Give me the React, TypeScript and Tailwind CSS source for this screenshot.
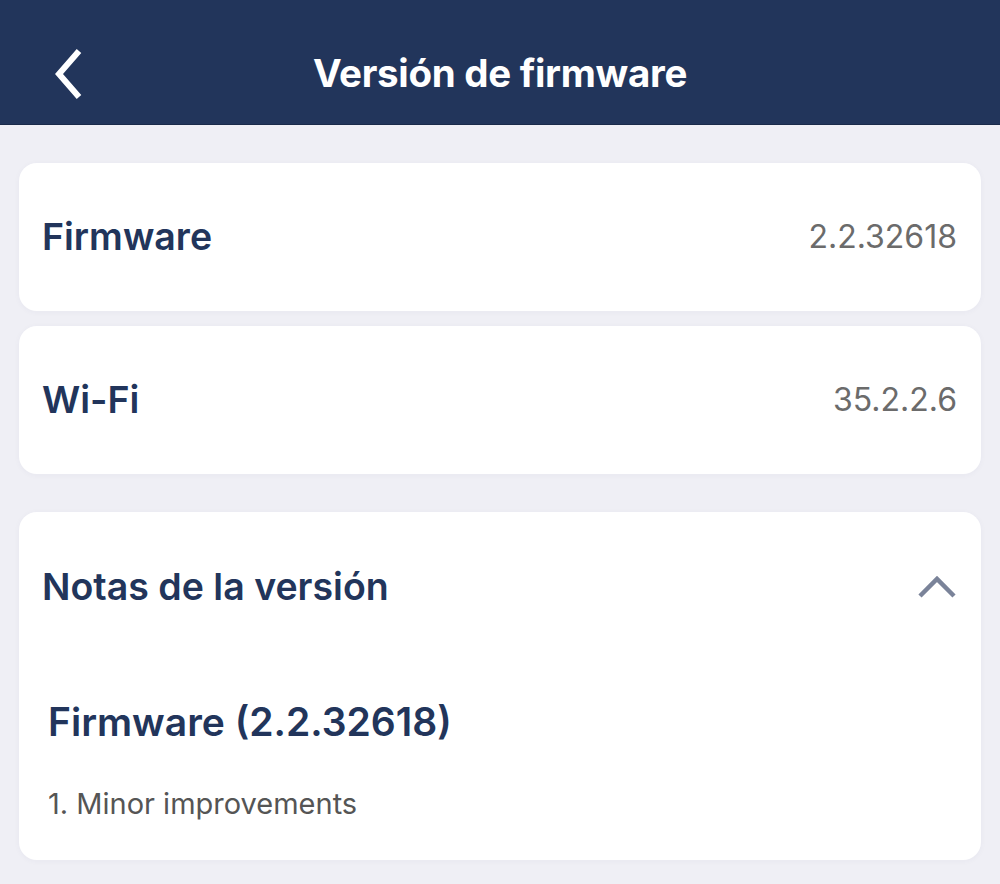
const font = { fontFamily: "Inter, 'Noto Sans', sans-serif" };

function ChevronLeft() {
  return (
    <svg width="36" height="52" viewBox="0 0 36 52" fill="none">
      <path d="M29 3 L9 26 L29 49" stroke="white" strokeWidth="6" strokeLinecap="butt" strokeLinejoin="miter" />
    </svg>
  );
}

function ChevronUp() {
  return (
    <svg width="38" height="24" viewBox="0 0 38 24" fill="none">
      <path d="M2 21 L19 4 L36 21" stroke="#7a8399" strokeWidth="4.5" strokeLinejoin="miter" />
    </svg>
  );
}

function InfoRow({ label, value }: { label: string; value: string }) {
  return (
    <div className="flex h-[148px] items-center justify-between rounded-[18px] bg-white pl-[23px] pr-[24px] shadow-[0_1px_6px_rgba(40,50,90,0.04)]">
      <span className="text-[37.5px] font-semibold leading-[44px] text-[#22355b]">{label}</span>
      <span className="text-[32px] leading-[38px] text-[#6b6b6b]">{value}</span>
    </div>
  );
}

export default function App() {
  return (
    <div className="min-h-[884px] w-full bg-[#efeff5]" style={font}>
      <header className="relative flex h-[125px] items-center justify-center border-b border-[#1a2a4a] bg-[#22355b] pt-[22px]">
        <button className="absolute left-[50px] top-[48px]">
          <ChevronLeft />
        </button>
        <h1 className="text-[38.5px] font-bold leading-[46px] tracking-[-0.3px] text-white">Versión de firmware</h1>
      </header>

      <main className="px-[19px] pt-[38px]">
        <div className="flex flex-col gap-[15px]">
          <InfoRow label="Firmware" value="2.2.32618" />
          <InfoRow label="Wi-Fi" value="35.2.2.6" />
        </div>

        <section className="mt-[38px] rounded-[18px] bg-white shadow-[0_1px_6px_rgba(40,50,90,0.04)]">
          <div className="flex h-[150px] items-center justify-between pl-[23px] pr-[25px]">
            <span className="text-[37.5px] font-semibold leading-[44px] text-[#22355b]">Notas de la versión</span>
            <ChevronUp />
          </div>
          <div className="pb-[38px] pl-[29px] pt-[36px]">
            <div className="text-[39px] font-semibold leading-[47px] text-[#22355b]">Firmware (2.2.32618)</div>
            <div className="mt-[41px] text-[29px] leading-[36px] text-[#555555]">1. Minor improvements</div>
          </div>
        </section>
      </main>
    </div>
  );
}
